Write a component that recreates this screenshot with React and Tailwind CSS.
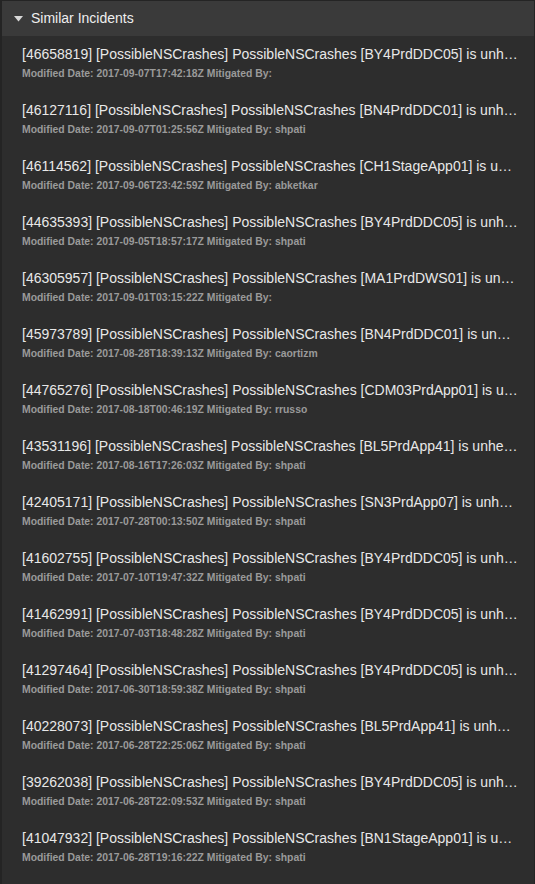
import React from "react";

const incidents = [
  ["46658819", "BY4PrdDDC05", "2017-09-07T17:42:18Z", ""],
  ["46127116", "BN4PrdDDC01", "2017-09-07T01:25:56Z", "shpati"],
  ["46114562", "CH1StageApp01", "2017-09-06T23:42:59Z", "abketkar"],
  ["44635393", "BY4PrdDDC05", "2017-09-05T18:57:17Z", "shpati"],
  ["46305957", "MA1PrdDWS01", "2017-09-01T03:15:22Z", ""],
  ["45973789", "BN4PrdDDC01", "2017-08-28T18:39:13Z", "caortizm"],
  ["44765276", "CDM03PrdApp01", "2017-08-18T00:46:19Z", "rrusso"],
  ["43531196", "BL5PrdApp41", "2017-08-16T17:26:03Z", "shpati"],
  ["42405171", "SN3PrdApp07", "2017-07-28T00:13:50Z", "shpati"],
  ["41602755", "BY4PrdDDC05", "2017-07-10T19:47:32Z", "shpati"],
  ["41462991", "BY4PrdDDC05", "2017-07-03T18:48:28Z", "shpati"],
  ["41297464", "BY4PrdDDC05", "2017-06-30T18:59:38Z", "shpati"],
  ["40228073", "BL5PrdApp41", "2017-06-28T22:25:06Z", "shpati"],
  ["39262038", "BY4PrdDDC05", "2017-06-28T22:09:53Z", "shpati"],
  ["41047932", "BN1StageApp01", "2017-06-28T19:16:22Z", "shpati"],
];

export default function App() {
  return (
    <div
      className="h-[884px] w-[535px] overflow-hidden border-t border-l-2 border-r border-[#242424] bg-[#2d2d2d]"
      style={{ fontFamily: '"Liberation Sans", Arial, sans-serif' }}
    >
      {/* header */}
      <div className="flex h-[35px] items-center gap-[8px] bg-[#3a3a3a] pl-[12px]">
        <svg width="9" height="6" viewBox="0 0 9 6" className="mt-[1px]">
          <path d="M0 0 L9 0 L4.5 5.5 Z" fill="#d8d8d8" />
        </svg>
        <span className="text-[14px] text-[#eeeeee]">Similar Incidents</span>
      </div>

      {/* list */}
      <div className="flex flex-col">
        {incidents.map(([id, server, date, by]) => (
          <div key={id} className="py-[8px] pl-[20px] pr-[16px]">
            <div className="truncate text-[14px] leading-[20px] text-[#e8e8e8]">
              [{id}] [PossibleNSCrashes] PossibleNSCrashes [{server}] is unhealthy
            </div>
            <div className="text-[10.4px] font-bold leading-[20px] text-[#9a9a9a]">
              Modified Date: {date} Mitigated By: {by}
            </div>
          </div>
        ))}
      </div>
    </div>
  );
}
